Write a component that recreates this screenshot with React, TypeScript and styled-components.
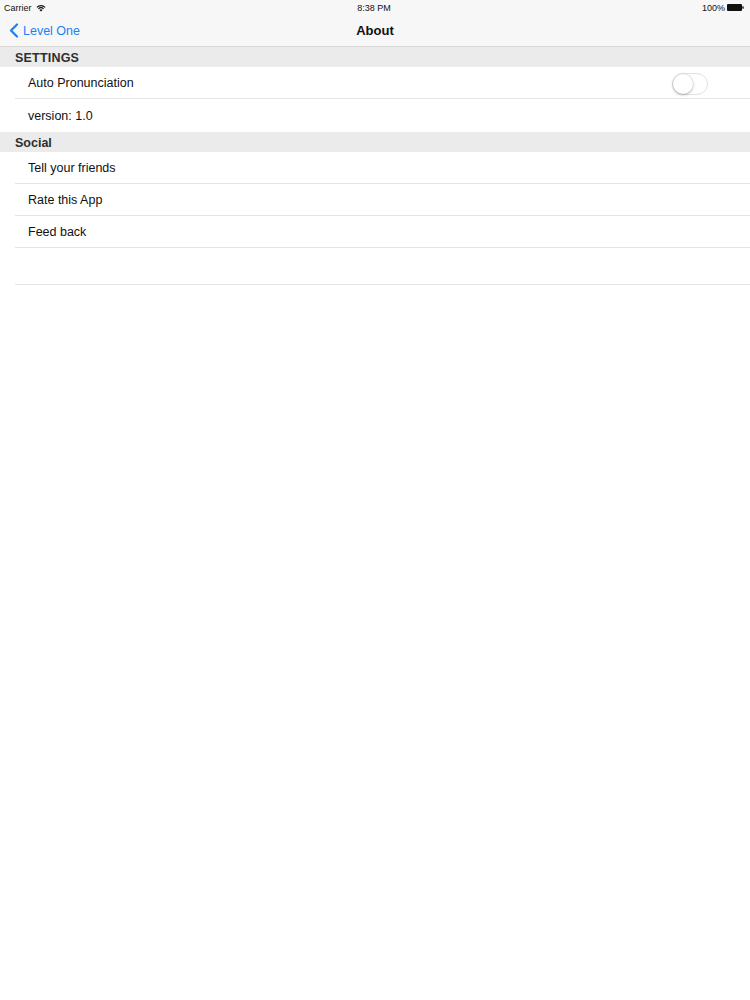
import React from "react";
import styled, { createGlobalStyle } from "styled-components";

const Global = createGlobalStyle`
    html, body {
        margin: 0;
        padding: 0;
        background: #ffffff;
        font-family: "Liberation Sans", Arial, sans-serif;
        color: #111;
    }
`

const Page = styled.div`
    width: 750px;
    min-height: 1000px;
    background: #fff;
`

const Top = styled.div`
    background: #f7f7f7;
    border-bottom: 1px solid #d9d9d9;
`

const StatusBar = styled.div`
    height: 15px;
    display: grid;
    grid-template-columns: 1fr auto 1fr;
    align-items: center;
    padding: 0 6px 0 4px;
    font-size: 9px;
    color: #111;
`

const StatusLeft = styled.div`
    display: flex;
    align-items: center;
    gap: 4px;
`

const StatusRight = styled.div`
    display: flex;
    align-items: center;
    justify-content: flex-end;
    gap: 2px;
`

const NavBar = styled.div`
    height: 31px;
    display: grid;
    grid-template-columns: 1fr auto 1fr;
    align-items: center;
    padding: 0 9px;
`

const Back = styled.div`
    display: flex;
    align-items: center;
    gap: 4px;
    color: #1b7ff5;
    font-size: 12.5px;
`

const Title = styled.div`
    font-size: 13px;
    font-weight: 700;
    color: #111;
`

const SectionHeader = styled.div<{ upper?: boolean }>`
    height: 20px;
    background: #ebebeb;
    display: flex;
    align-items: center;
    padding: 1px 0 0 15px;
    box-sizing: border-box;
    font-size: 12.5px;
    font-weight: 700;
    color: #2e2e2e;
    letter-spacing: ${p => (p.upper ? "0.2px" : "0")};
`

const Row = styled.div<{ h?: number }>`
    height: ${p => p.h ?? 32}px;
    margin-left: 15px;
    padding: 1px 42px 0 13px;
    display: flex;
    align-items: center;
    justify-content: space-between;
    font-size: 12.5px;
    color: #111;
    border-bottom: 1px solid #e4e4e4;
    box-sizing: border-box;
    &.last-in-section {
        border-bottom: none;
    }
`

const Switch = styled.div`
    width: 36px;
    height: 22px;
    border-radius: 12px;
    border: 1px solid #e3e3e3;
    background: #fff;
    position: relative;
    box-sizing: border-box;
    margin-top: 1px;
    &::after {
        content: "";
        position: absolute;
        left: 0;
        top: 0;
        width: 20px;
        height: 20px;
        border-radius: 50%;
        background: #fff;
        box-shadow: 0 1px 3px rgba(0, 0, 0, 0.28), 0 0 0 0.5px rgba(0, 0, 0, 0.08);
    }
`

const Wifi = () => (
    <svg width="10" height="8" viewBox="0 0 10 8">
        <path d="M5 7.6 L3.4 5.9 A2.3 2.3 0 0 1 6.6 5.9 Z" fill="#111"/>
        <path d="M2.4 4.9 A3.7 3.7 0 0 1 7.6 4.9" stroke="#111" strokeWidth="1.1" fill="none"/>
        <path d="M0.9 3.3 A5.8 5.8 0 0 1 9.1 3.3" stroke="#111" strokeWidth="1.1" fill="none"/>
    </svg>
)

const Battery = () => (
    <svg width="17" height="7" viewBox="0 0 17 7">
        <rect x="0" y="0" width="15" height="7" rx="1" fill="#111"/>
        <rect x="15.3" y="2.2" width="1.4" height="2.6" rx="0.5" fill="#111"/>
    </svg>
)

const Chevron = () => (
    <svg width="10" height="15" viewBox="0 0 10 15">
        <path d="M8 1.5 L2 7.5 L8 13.5" stroke="#1b7ff5" strokeWidth="2.2" fill="none" strokeLinecap="round" strokeLinejoin="round"/>
    </svg>
)

export default function App() {
    return (
        <Page>
            <Global/>
            <Top>
                <StatusBar>
                    <StatusLeft>
                        <span>Carrier</span>
                        <Wifi/>
                    </StatusLeft>
                    <span>8:38 PM</span>
                    <StatusRight>
                        <span>100%</span>
                        <Battery/>
                    </StatusRight>
                </StatusBar>
                <NavBar>
                    <Back>
                        <Chevron/>
                        <span>Level One</span>
                    </Back>
                    <Title>About</Title>
                    <div/>
                </NavBar>
            </Top>
            <SectionHeader upper>SETTINGS</SectionHeader>
            <Row>
                Auto Pronunciation
                <Switch/>
            </Row>
            <Row className="last-in-section" h={33}>version: 1.0</Row>
            <SectionHeader>Social</SectionHeader>
            <Row>Tell your friends</Row>
            <Row>Rate this App</Row>
            <Row>Feed back</Row>
            <Row h={37}/>
        </Page>
    )
}
